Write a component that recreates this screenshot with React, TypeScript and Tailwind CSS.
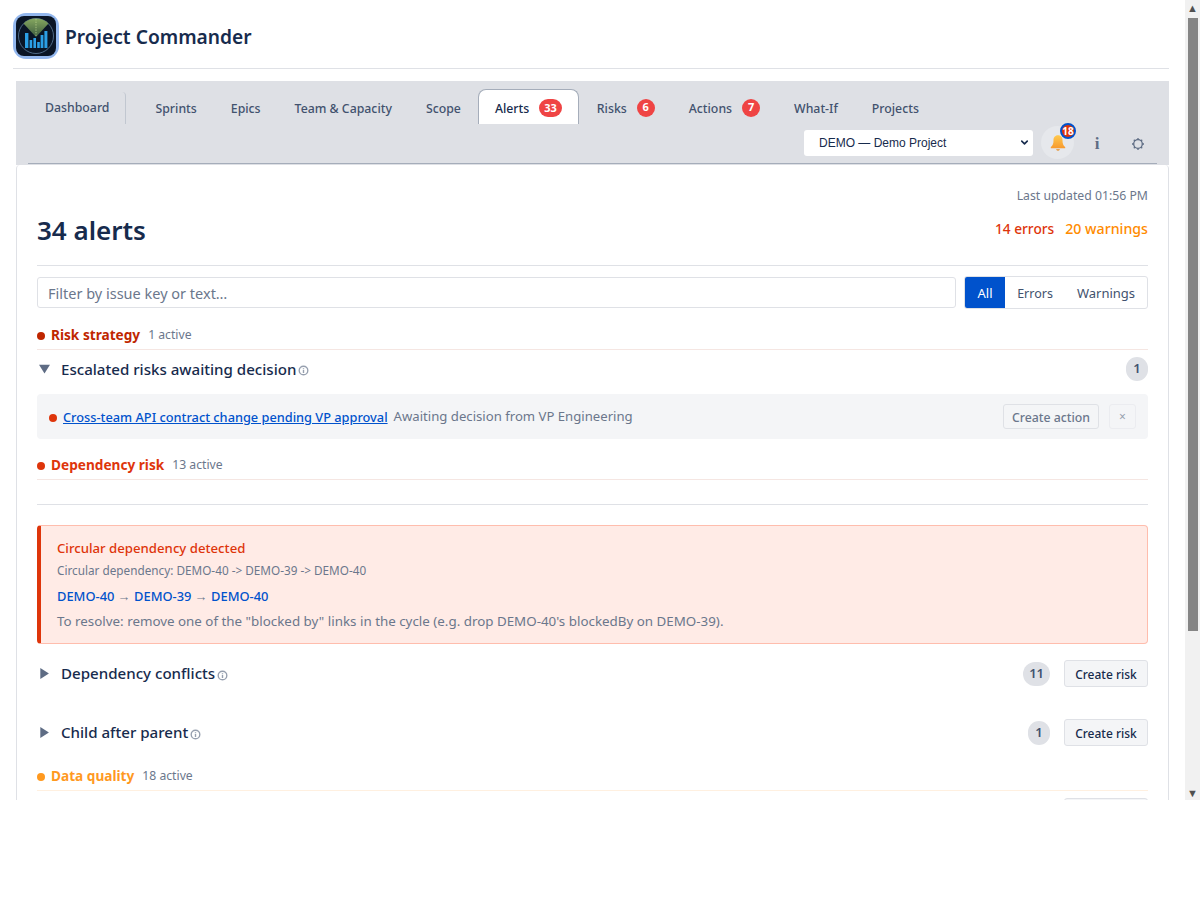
import { ChevronDown } from "lucide-react";

const tabs = [
  { label: "Sprints" },
  { label: "Epics" },
  { label: "Team & Capacity" },
  { label: "Scope" },
  { label: "Alerts", badge: "33", active: true },
  { label: "Risks", badge: "6" },
  { label: "Actions", badge: "7" },
  { label: "What-If" },
  { label: "Projects" },
];

function Logo() {
  return (
    <div className="w-[46px] h-[46px] rounded-[13px] bg-[#93b7ee] p-[3px] shrink-0">
      <svg viewBox="0 0 40 40" className="w-10 h-10 block">
        <defs>
          <linearGradient id="wedge" x1="0" y1="0" x2="0" y2="1">
            <stop offset="0" stopColor="#86a860" />
            <stop offset="1" stopColor="#3c5a3e" />
          </linearGradient>
        </defs>
        <rect width="40" height="40" rx="8" fill="#0a1526" />
        <circle cx="20" cy="20" r="17.5" fill="none" stroke="#5f7fa0" strokeWidth="0.8" />
        <path d="M20 21 L7.5 7.5 A18 18 0 0 1 32.5 7.5 Z" fill="url(#wedge)" />
        <path d="M20 3v17" stroke="#b7cf8c" strokeWidth="0.8" strokeDasharray="1.4 1.2" />
        <g fill="#2b9fe6">
          <rect x="9" y="17" width="3.4" height="15" />
          <rect x="13.6" y="24" width="2.6" height="8" />
          <rect x="17.4" y="22" width="2.6" height="10" />
          <rect x="21.2" y="26" width="2.6" height="6" />
          <rect x="24.6" y="19" width="2.8" height="13" />
          <rect x="28.4" y="15" width="3" height="17" />
        </g>
      </svg>
    </div>
  );
}

function Bell() {
  return (
    <svg viewBox="0 0 20 20" className="w-[18px] h-[18px]">
      <defs>
        <linearGradient id="bell" x1="0" y1="0" x2="0" y2="1">
          <stop offset="0" stopColor="#ffc94d" />
          <stop offset="1" stopColor="#f79a2e" />
        </linearGradient>
      </defs>
      <path d="M10 1.5c-3.4 0-5 2.6-5 5.6 0 3.6-1 5.6-3 7.4v1.2h16v-1.2c-2-1.8-3-3.8-3-7.4 0-3-1.6-5.6-5-5.6z" fill="url(#bell)" />
      <path d="M7.8 17a2.3 2.3 0 0 0 4.4 0z" fill="#e98a1d" />
    </svg>
  );
}

function Gear() {
  return (
    <svg viewBox="0 0 14 14" className="w-[14px] h-[14px]" fill="none" stroke="#5e6c84">
      <circle cx="7" cy="7" r="4.3" strokeWidth="1.3" />
      <path d="M7 1v1.6M7 11.4V13M1 7h1.6M11.4 7H13M2.8 2.8l1.1 1.1M10.1 10.1l1.1 1.1M2.8 11.2l1.1-1.1M10.1 3.9l1.1-1.1" strokeWidth="1.3" />
    </svg>
  );
}

function InfoMark() {
  return (
    <svg viewBox="0 0 12 12" className="w-[11px] h-[11px] ml-[2px] mt-[3px] shrink-0" fill="none" stroke="#97a0af" strokeWidth="1.5">
      <circle cx="6" cy="6" r="4.7" />
      <path d="M6 3.2v1M6 5.2v3.4" strokeWidth="1.5" />
    </svg>
  );
}

function SectionHead({ name, count, dot, text, line }: { name: string; count: string; dot: string; text: string; line: string }) {
  return (
    <div className={`flex items-center h-[28px] border-b ${line}`}>
      <span className={`w-2 h-2 rounded-full mr-[6px] ${dot}`} />
      <span className={`text-[13.65px] font-bold ${text}`}>{name}</span>
      <span className="text-[12.2px] text-[#6b778c] ml-2">{count}</span>
    </div>
  );
}

function Group({ title, open, count, action }: { title: string; open?: boolean; count: string; action?: boolean }) {
  return (
    <div className="flex items-center h-full">
      <span className={`w-[11px] h-[11px] mr-[11px] ml-[2px] bg-[#5e6c84] ${open ? "[clip-path:polygon(0_12%,100%_12%,50%_90%)]" : "[clip-path:polygon(12%_0,90%_50%,12%_100%)]"}`} />
      <span className="text-[15.1px] font-medium text-[#172b4d]">{title}</span>
      <InfoMark />
      <span className="flex-1" />
      <span className="min-w-[22px] h-6 px-[6px] rounded-full bg-[#dfe1e6] text-[#42526e] text-[13px] font-semibold flex items-center justify-center">{count}</span>
      {action && (
        <button className="ml-[14px] w-[84px] h-[27px] pt-[2px] rounded-[3px] border border-[#dfe1e6] bg-[#f4f5f7] text-[12px] font-medium text-[#172b4d]">Create risk</button>
      )}
    </div>
  );
}

export default function App() {
  return (
    <div className="h-[900px] bg-white font-['Noto_Sans',sans-serif] overflow-hidden">
      <div className="h-[800px] flex overflow-hidden">
        <div className="flex-1 min-w-0 pl-4 pr-4">
          <header className="h-[69px] pt-[4px] flex items-center gap-[6px] border-b border-[#dfe1e6] -ml-[3px]">
            <Logo />
            <h1 className="text-[19.2px] font-semibold text-[#172b4d] mt-[2px]">Project Commander</h1>
          </header>

          <nav className="mt-3 h-[84px] bg-[#dee0e5] px-3">
            <div className="flex h-[43px] pt-2 items-start">
              <div className="h-[32px] mt-[3px] pt-[1px] pl-[17px] pr-[16px] flex items-center text-[12.3px] font-medium text-[#42526e] border-r border-[#c1c7d0] rounded-tr-[4px] mr-[12px]">Dashboard</div>
              {tabs.map((t) => (
                <div
                  key={t.label}
                  className={`h-[35px] flex items-center text-[12.3px] font-medium ${t.active ? "pt-[4px] mr-[1px] bg-white text-[#172b4d] border border-b-0 border-[#a5adba] rounded-t-[8px] px-4" : "pt-[6px] px-[17px] text-[#42526e]"}`}
                >
                  {t.label}
                  {t.badge && (
                    <span className={`ml-[10px] min-w-[18px] h-[18px] px-[5px] rounded-full bg-[#ef4444] text-white text-[11px] font-bold flex items-center justify-center ${t.active ? "-mt-[2px]" : "-mt-[4px]"}`}>{t.badge}</span>
                  )}
                </div>
              ))}
            </div>
            <div className="flex items-center justify-end h-[40px] border-b border-[#a5adba]">
              <div className="relative w-[229px] h-[26px] mr-[8px] -mt-[4px]">
                <select className="appearance-none w-full h-full rounded-[3px] bg-white pl-[15px] text-[12px] text-[#172b4d] font-['Liberation_Sans',sans-serif]" defaultValue="DEMO">
                  <option value="DEMO">DEMO — Demo Project</option>
                </select>
                <ChevronDown className="absolute right-[3px] top-[8px] w-[11px] h-[11px] text-[#172b4d] pointer-events-none" strokeWidth={3.5} />
              </div>
              <div className="relative w-[33px] h-[33px] rounded-full bg-[#e6e8ec] flex items-center justify-center -mt-[2px]">
                <Bell />
                <span className="absolute -top-[3px] -right-[2px] w-[16px] h-[16px] rounded-full bg-[#de350b] border-2 border-[#0052cc] text-white text-[10px] font-bold flex items-center justify-center">18</span>
              </div>
              <span className="w-[40px] ml-[3px] mr-[2px] text-center text-[17px] leading-none font-bold text-[#5e6c84] font-['Liberation_Serif',serif]">i</span>
              <span className="w-[38px] flex justify-center"><Gear /></span>
            </div>
          </nav>

          <main className="h-[640px] border-x border-[#dfe1e6] px-5 rounded-t-[4px]">
            <div className="pt-[23px] text-right text-[12.25px] leading-4 text-[#6b778c]">Last updated 01:56 PM</div>
            <div className="flex items-center justify-between h-[32px] mt-[10px] mb-[19px]">
              <h2 className="text-[26px] font-semibold text-[#172b4d]">34 alerts</h2>
              <div className="text-[14.2px] font-medium -mt-[3px]">
                <span className="text-[#de350b] text-[13.7px]">14 errors</span>
                <span className="text-[#ff8b00] ml-[11px]">20 warnings</span>
              </div>
            </div>
            <div className="border-t border-[#dfe1e6] pt-[10px] flex items-center gap-2 h-[44px]">
              <input readOnly placeholder="Filter by issue key or text…" className="flex-1 h-[31px] rounded-[3px] border border-[#dfe1e6] px-[10px] text-[14.5px] placeholder:text-[#6b778c] outline-none" />
              <div className="flex h-[33px] w-[184px] rounded-[3px] border border-[#dfe1e6] overflow-hidden text-[13px] text-[#42526e]">
                <span className="w-[40px] bg-[#0052cc] text-white flex items-center justify-center pt-[2px]">All</span>
                <span className="w-[60px] flex items-center justify-center pt-[3px] text-[12.5px]">Errors</span>
                <span className="flex-1 flex items-center justify-center pt-[2px]">Warnings</span>
              </div>
            </div>

            <div className="mt-[13px]">
              <SectionHead name="Risk strategy" count="1 active" dot="bg-[#bf2600]" text="text-[#bf2600]" line="border-[#f5e6e2]" />
            </div>
            <div className="h-[40px] pb-[2px]"><Group title="Escalated risks awaiting decision" open count="1" /></div>
            <div className="mt-[4px] h-[45px] rounded-[4px] bg-[#f4f5f7] flex items-center pl-3 pr-3">
              <span className="w-2 h-2 rounded-full bg-[#de350b] mr-[6px] mt-[2px]" />
              <a className="text-[12.77px] font-medium text-[#0052cc] underline pt-[2px]">Cross-team API contract change pending VP approval</a>
              <span className="text-[13.15px] text-[#6b778c] ml-[6px] mt-[1px]">Awaiting decision from VP Engineering</span>
              <span className="flex-1" />
              <button className="w-[96px] h-[25px] pt-[3px] rounded-[3px] border border-[#dfe1e6] text-[12.3px] font-medium text-[#6b778c]">Create action</button>
              <button className="ml-[10px] w-[27px] h-[25px] pt-[1px] rounded-[3px] border border-[#ebecf0] text-[12px] text-[#97a0af]">×</button>
            </div>

            <div className="mt-[13px]">
              <SectionHead name="Dependency risk" count="13 active" dot="bg-[#de350b]" text="text-[#de350b]" line="border-[#f5e6e2]" />
            </div>

            <div className="mt-6 border-t border-[#dfe1e6] pt-5">
              <div className="h-[119px] rounded-[4px] border border-[#ffbdad] border-l-4 border-l-[#de350b] bg-[#ffebe6] pl-4 pt-[13px]">
                <div className="text-[13.2px] font-medium text-[#de350b] leading-[18px]">Circular dependency detected</div>
                <div className="text-[11.75px] text-[#6b778c] leading-4 mt-[5px]">Circular dependency: DEMO-40 -&gt; DEMO-39 -&gt; DEMO-40</div>
                <div className="text-[12.9px] font-medium text-[#0052cc] leading-4 mt-[10px]">
                  DEMO-40 <span className="font-normal text-[#6b778c]">→</span> DEMO-39 <span className="font-normal text-[#6b778c]">→</span> DEMO-40
                </div>
                <div className="text-[13.36px] text-[#6b778c] leading-4 mt-[9px]">To resolve: remove one of the "blocked by" links in the cycle (e.g. drop DEMO-40's blockedBy on DEMO-39).</div>
              </div>
            </div>

            <div className="h-[59px]"><Group title="Dependency conflicts" count="11" action /></div>
            <div className="h-[59px]"><Group title="Child after parent" count="1" action /></div>
            <div className="mt-[1px]">
              <SectionHead name="Data quality" count="18 active" dot="bg-[#ff991f]" text="text-[#ff991f]" line="border-[#fff0e0]" />
            </div>
            <div className="flex justify-end mt-[7px]">
              <button className="w-[84px] h-[27px] rounded-[3px] border border-[#dfe1e6] bg-[#f4f5f7]" />
            </div>
          </main>
        </div>

        <div className="w-[15px] shrink-0 bg-[#f1f1f1] flex flex-col items-center">
          <span className="h-[15px] w-full flex items-center justify-center text-[#505050] text-[11px] leading-none">▲</span>
          <span className="w-[10px] ml-[1px] h-[613px] mt-[3px] bg-[#858585]" />
          <span className="flex-1" />
          <span className="h-[15px] w-full flex items-center justify-center text-[#505050] text-[11px] leading-none">▼</span>
        </div>
      </div>
    </div>
  );
}
